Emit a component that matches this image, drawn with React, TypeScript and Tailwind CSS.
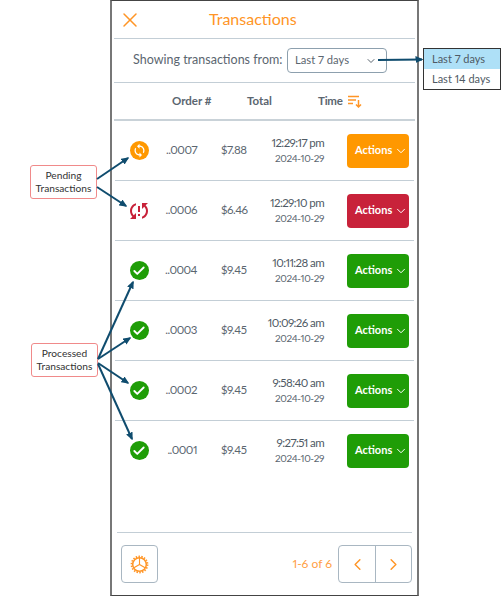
import React from "react";
import { X, ChevronDown, ChevronLeft, ChevronRight, Check } from "lucide-react";

const rows = [
  { id: "..0007", total: "$7.88", time: "12:29:17 pm", kind: "pending" },
  { id: "..0006", total: "$6.46", time: "12:29:10 pm", kind: "failed" },
  { id: "..0004", total: "$9.45", time: "10:11:28 am", kind: "done" },
  { id: "..0003", total: "$9.45", time: "10:09:26 am", kind: "done" },
  { id: "..0002", total: "$9.45", time: "9:58:40 am", kind: "done" },
  { id: "..0001", total: "$9.45", time: "9:27:51 am", kind: "done" },
];

function StatusIcon({ kind }: { kind: string }) {
  if (kind === "pending")
    return (
      <div className="w-[19px] h-[19px] rounded-full bg-[#ff9800] flex items-center justify-center">
        <svg width="15" height="15" viewBox="0 0 24 24" fill="#fff">
          <path d="M12 4V1L8 5l4 4V6c3.31 0 6 2.69 6 6 0 1.01-.25 1.97-.7 2.8l1.46 1.46C19.54 15.03 20 13.57 20 12c0-4.42-3.58-8-8-8zm0 14c-3.31 0-6-2.69-6-6 0-1.01.25-1.97.7-2.8L5.24 7.74C4.46 8.97 4 10.43 4 12c0 4.42 3.58 8 8 8v3l4-4-4-4v3z" />
        </svg>
      </div>
    );
  if (kind === "failed")
    return (
      <svg width="24" height="24" viewBox="0 0 24 24" fill="#c8223a">
        <path d="M3 12c0 2.21.91 4.2 2.36 5.64L3 20h6v-6l-2.24 2.24C5.68 15.15 5 13.66 5 12c0-2.61 1.67-4.83 4-5.65V4.26C5.55 5.15 3 8.27 3 12zm8 5h2v-2h-2v2zM21 4h-6v6l2.24-2.24C18.32 8.85 19 10.34 19 12c0 2.61-1.67 4.83-4 5.65v2.09c3.45-.89 6-4.01 6-7.74 0-2.21-.91-4.2-2.36-5.64L21 4zm-10 9h2V7h-2v6z" />
      </svg>
    );
  return (
    <div className="w-[19px] h-[19px] rounded-full bg-[#1f9d07] flex items-center justify-center">
      <Check size={14} color="#fff" strokeWidth={3.2} />
    </div>
  );
}

function Row({ r }: { r: (typeof rows)[number] }) {
  const bg = r.kind === "pending" ? "bg-[#ff9800]" : r.kind === "failed" ? "bg-[#c8223a]" : "bg-[#1f9d07]";
  return (
    <div className="h-[60px] mx-[3px] border-b border-[#c3ced6] flex items-center text-[#5b6670] last:border-b-transparent proportional-nums">
      <div className="w-[48px] flex justify-center"><StatusIcon kind={r.kind} /></div>
      <div className="w-[34px] pb-[1px] text-[11.5px] text-right tracking-[-0.5px] whitespace-nowrap">{r.id}</div>
      <div className="w-[24px]" />
      <div className="w-[30px] pb-[1px] text-[11.5px] tracking-[-0.5px]">{r.total}</div>
      <div className="w-[73px] flex flex-col items-end whitespace-nowrap">
        <div className="text-[11.5px] leading-[16px] text-[#4f5a64] tracking-[-0.6px]">{r.time}</div>
        <div className="text-[10px] leading-[15px] text-[#5b6670] tracking-[-0.4px]">2024-10-29</div>
      </div>
      <div className="w-[23px]" />
      <button className={`${bg} w-[62px] h-[34px] rounded-[4px] flex items-center justify-between pl-[8px] pr-[1px] text-white text-[11px] font-bold`}>
        <span>Actions</span>
        <ChevronDown size={14} color="#fff" strokeWidth={1.7} />
      </button>
    </div>
  );
}

function Callout({ className, a, b }: { className: string; a: string; b: string }) {
  return (
    <div className={`absolute w-[67px] h-[34px] bg-white border border-[#f08a8a] rounded-[3px] flex flex-col items-center justify-center text-[10.2px] leading-[12.5px] text-[#333] pb-[1px] ${className}`}>
      <div>{a}</div>
      <div>{b}</div>
    </div>
  );
}

export default function App() {
  return (
    <div className="relative w-[501px] h-[596px] bg-white overflow-hidden" style={{ fontFamily: '"Lato", "Noto Sans", sans-serif' }}>
      <div className="ml-[110px] w-[309px] h-[596px] border-x-2 border-t border-b border-x-[#777] border-t-[#444] border-b-[#444] flex flex-col">
        <div className="h-[38px] mx-[2px] border-b border-[#c3ced6] flex items-center relative shrink-0">
          <X size={24} color="#ff9526" strokeWidth={1.5} className="ml-[4px]" />
          <div className="absolute left-[95px] top-[8px] text-[16px] leading-[20px] text-[#ff9526]">Transactions</div>
        </div>
        <div className="h-[44px] mx-[2px] border-b border-[#c3ced6] flex items-center shrink-0 text-[#5b6670]">
          <div className="ml-[19px] w-[154px] text-[12.5px] whitespace-nowrap">Showing transactions from:</div>
          <div className="w-[100px] h-[25px] border border-[#8da0ae] rounded-[4px] flex items-center justify-between pl-[7px] pr-[9px] text-[11.2px] proportional-nums">
            <span>Last 7 days</span>
            <ChevronDown size={12} color="#5b6670" />
          </div>
        </div>
        <div className="h-[38px] mx-[2px] border-b-2 border-[#c9d2d8] flex items-center shrink-0 text-[#5b6670] text-[11.5px] font-bold relative">
          <span className="ml-[58px] w-[75px]">Order #</span>
          <span className="w-[71px]">Total</span>
          <span className="tracking-[-0.2px]">Time</span>
          <svg className="ml-[5px]" width="14" height="13" viewBox="0 0 14 13" fill="none" stroke="#ff9526" strokeWidth="1.5">
            <path d="M0 1.5 H11 M0 5 H8 M0 8.5 H5 M10.5 5 V12 M8 9.5 L10.5 12 L13 9.5" />
          </svg>
        </div>
        <div className="h-[360px] shrink-0 flex flex-col">
          {rows.map((r) => <Row key={r.id} r={r} />)}
        </div>
        <div className="flex-1 flex flex-col justify-end">
          <div className="mx-[5px] h-[63px] border-t border-[#c3ced6] flex items-center">
            <button className="ml-[4px] w-[37px] h-[38px] border border-[#a9b7c2] rounded-[4px] flex items-center justify-center">
              <svg width="19" height="19" viewBox="0 0 19 19" fill="none" stroke="#ff9526">
                <circle cx="9.5" cy="9.5" r="6.8" strokeWidth="1.5" />
                <circle cx="9.5" cy="9.5" r="8" strokeWidth="1.8" strokeDasharray="1.5 1.3" />
                <path d="M9.5 9.5 V3 M9.5 9.5 L3.9 12.8 M9.5 9.5 L15.1 12.8" strokeWidth="1.1" />
              </svg>
            </button>
            <div className="ml-auto text-[12px] text-[#ff9f45] proportional-nums">1-6 of 6</div>
            <div className="ml-[6px] w-[74px] h-[38px] border border-[#a9b7c2] rounded-[4px] flex">
              <div className="w-[37px] border-r border-[#a9b7c2] flex items-center justify-center">
                <ChevronLeft size={19} color="#ff9526" strokeWidth={1.8} />
              </div>
              <div className="flex-1 flex items-center justify-center">
                <ChevronRight size={19} color="#ff9526" strokeWidth={1.8} />
              </div>
            </div>
          </div>
        </div>
      </div>

      <Callout className="left-[30px] top-[165px]" a="Pending" b="Transactions" />
      <Callout className="left-[31px] top-[343px]" a="Processed" b="Transactions" />

      <div className="absolute left-[423px] top-[48px] w-[78px] h-[42px] bg-white border border-[#333] text-[11px] text-[#4f5a64] proportional-nums">
        <div className="h-[20px] bg-[#aee0f7] flex items-center pl-[8px]">Last 7 days</div>
        <div className="h-[20px] flex items-center pl-[8px]">Last 14 days</div>
      </div>

      <svg className="absolute left-0 top-0 pointer-events-none" width="501" height="596" fill="none" stroke="#0f4c6e" strokeWidth="2">
        <defs>
          <marker id="arr" markerWidth="8" markerHeight="8" refX="6.5" refY="3.5" orient="auto" markerUnits="userSpaceOnUse">
            <path d="M0 0 L8 3.5 L0 7 Z" fill="#0f4c6e" stroke="none" />
          </marker>
        </defs>
        <path d="M378 60 L422 59.5" markerEnd="url(#arr)" />
        <path d="M97 179 L128 158" markerEnd="url(#arr)" />
        <path d="M97 187 L126 206" markerEnd="url(#arr)" />
        <path d="M98 359 L133 282" markerEnd="url(#arr)" />
        <path d="M98 359 L130 338" markerEnd="url(#arr)" />
        <path d="M98 363 L128 383" markerEnd="url(#arr)" />
        <path d="M98 364 L132 439" markerEnd="url(#arr)" />
      </svg>
    </div>
  );
}
